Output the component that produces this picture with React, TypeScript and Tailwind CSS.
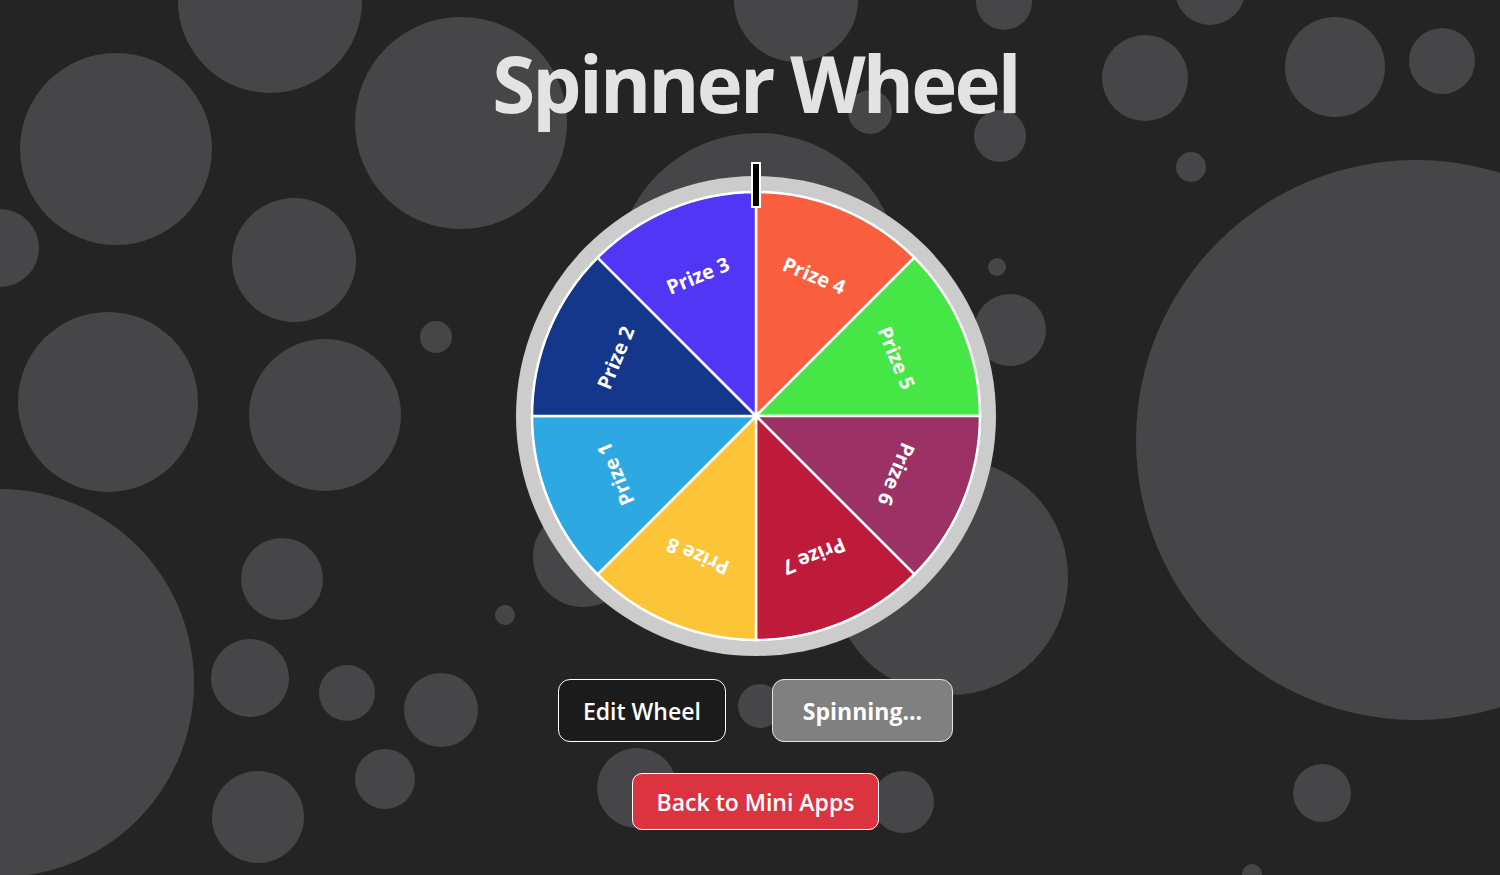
import React from 'react';

interface Bubble {
  x: number;
  y: number;
  r: number;
}

// decorative background bubbles (free canvas)
const BUBBLES: Bubble[] = [
  { x: 270, y: 1, r: 92 },
  { x: 116, y: 149, r: 96 },
  { x: 461, y: 123, r: 106 },
  { x: 0, y: 248, r: 39 },
  { x: 294, y: 260, r: 62 },
  { x: 108, y: 402, r: 90 },
  { x: 325, y: 415, r: 76 },
  { x: 436, y: 337, r: 16 },
  { x: 0, y: 683, r: 194 },
  { x: 282, y: 579, r: 41 },
  { x: 250, y: 678, r: 39 },
  { x: 347, y: 693, r: 28 },
  { x: 441, y: 710, r: 37 },
  { x: 385, y: 779, r: 30 },
  { x: 258, y: 817, r: 46 },
  { x: 505, y: 615, r: 10 },
  { x: 583, y: 557, r: 50 },
  { x: 796, y: 0, r: 62 },
  { x: 758, y: 275, r: 142 },
  { x: 1004, y: 2, r: 28 },
  { x: 870, y: 112, r: 22 },
  { x: 1000, y: 136, r: 26 },
  { x: 1145, y: 78, r: 43 },
  { x: 1335, y: 67, r: 50 },
  { x: 1442, y: 61, r: 33 },
  { x: 1210, y: -10, r: 35 },
  { x: 1191, y: 167, r: 15 },
  { x: 997, y: 267, r: 9 },
  { x: 1010, y: 330, r: 36 },
  { x: 1416, y: 440, r: 280 },
  { x: 950, y: 577, r: 118 },
  { x: 760, y: 706, r: 22 },
  { x: 637, y: 788, r: 40 },
  { x: 903, y: 802, r: 31 },
  { x: 1322, y: 793, r: 29 },
  { x: 1252, y: 874, r: 10 },
];

// slices clockwise from the top
const SLICES = [
  { label: 'Prize 4', color: '#F95F3F' },
  { label: 'Prize 5', color: '#45E645' },
  { label: 'Prize 6', color: '#9C3166' },
  { label: 'Prize 7', color: '#BE1A3A' },
  { label: 'Prize 8', color: '#FCC437' },
  { label: 'Prize 1', color: '#2DA8E3' },
  { label: 'Prize 2', color: '#14378C' },
  { label: 'Prize 3', color: '#5236F5' },
];

const C = 240;
const R = 224;

function pt(deg: number, r: number) {
  const a = (deg * Math.PI) / 180;
  return [C + r * Math.sin(a), C - r * Math.cos(a)];
}

function Wheel() {
  const step = 360 / SLICES.length;
  return (
    <svg width="480" height="480" viewBox="0 0 480 480" className="block">
      <circle cx={C} cy={C} r={240} fill="#cccccc" />
      {SLICES.map((s, i) => {
        const a0 = i * step;
        const a1 = a0 + step;
        const [x0, y0] = pt(a0, R);
        const [x1, y1] = pt(a1, R);
        return (
          <path
            key={s.label}
            d={`M${C},${C} L${x0},${y0} A${R},${R} 0 0 1 ${x1},${y1} Z`}
            fill={s.color}
            stroke="#ffffff"
            strokeWidth={2.5}
          />
        );
      })}
      <circle cx={C} cy={C} r={R} fill="none" stroke="#ffffff" strokeWidth={1.5} />
      {SLICES.map((s, i) => {
        const mid = i * step + step / 2;
        return (
          <text
            key={s.label + '-t'}
            x={C}
            y={C - 150}
            transform={`rotate(${mid} ${C} ${C})`}
            textAnchor="middle"
            dominantBaseline="middle"
            fill="#ffffff"
            fontSize="20"
            fontWeight="700"
            fontFamily="'Open Sans', 'Noto Sans', sans-serif"
          >
            {s.label}
          </text>
        );
      })}
    </svg>
  );
}

export default function App() {
  return (
    <div className="relative min-h-screen h-[875px] overflow-hidden bg-[#242424] font-['Open_Sans','Noto_Sans',sans-serif]">
      {/* Background bubbles */}
      <div className="absolute inset-0 pointer-events-none">
        {BUBBLES.map((b, i) => (
          <div
            key={i}
            className="absolute rounded-full bg-[#464648]"
            style={{ left: b.x - b.r, top: b.y - b.r, width: b.r * 2, height: b.r * 2 }}
          />
        ))}
      </div>

      <div className="relative flex flex-col items-center pl-[11px]">
        <h1 className="mt-[44px] text-[78px] leading-none font-bold tracking-[-2.8px] text-[#e3e3e3]">
          Spinner Wheel
        </h1>

        <div className="relative mt-[54px] w-[480px] h-[480px]">
          <Wheel />
          {/* Pointer */}
          <div className="absolute left-1/2 -translate-x-1/2 top-[-14px] w-[10px] h-[46px] bg-black border-2 border-white" />
        </div>

        <div className="mt-[23px] flex items-center gap-[46px]">
          <button className="h-[63px] px-[24px] pt-[2px] rounded-[12px] border border-white bg-[#1b1b1b] text-white text-[23px] font-semibold">
            Edit Wheel
          </button>
          <button className="h-[63px] px-[30px] pt-[2px] rounded-[12px] border border-[#e5e5e5] bg-[#808080] text-white text-[23px] font-bold">
            Spinning...
          </button>
        </div>

        <button className="mt-[31px] h-[57px] px-[24px] pt-[2px] rounded-[10px] border border-white bg-[#dc3340] text-white text-[23px] font-semibold">
          Back to Mini Apps
        </button>
      </div>
    </div>
  );
}
